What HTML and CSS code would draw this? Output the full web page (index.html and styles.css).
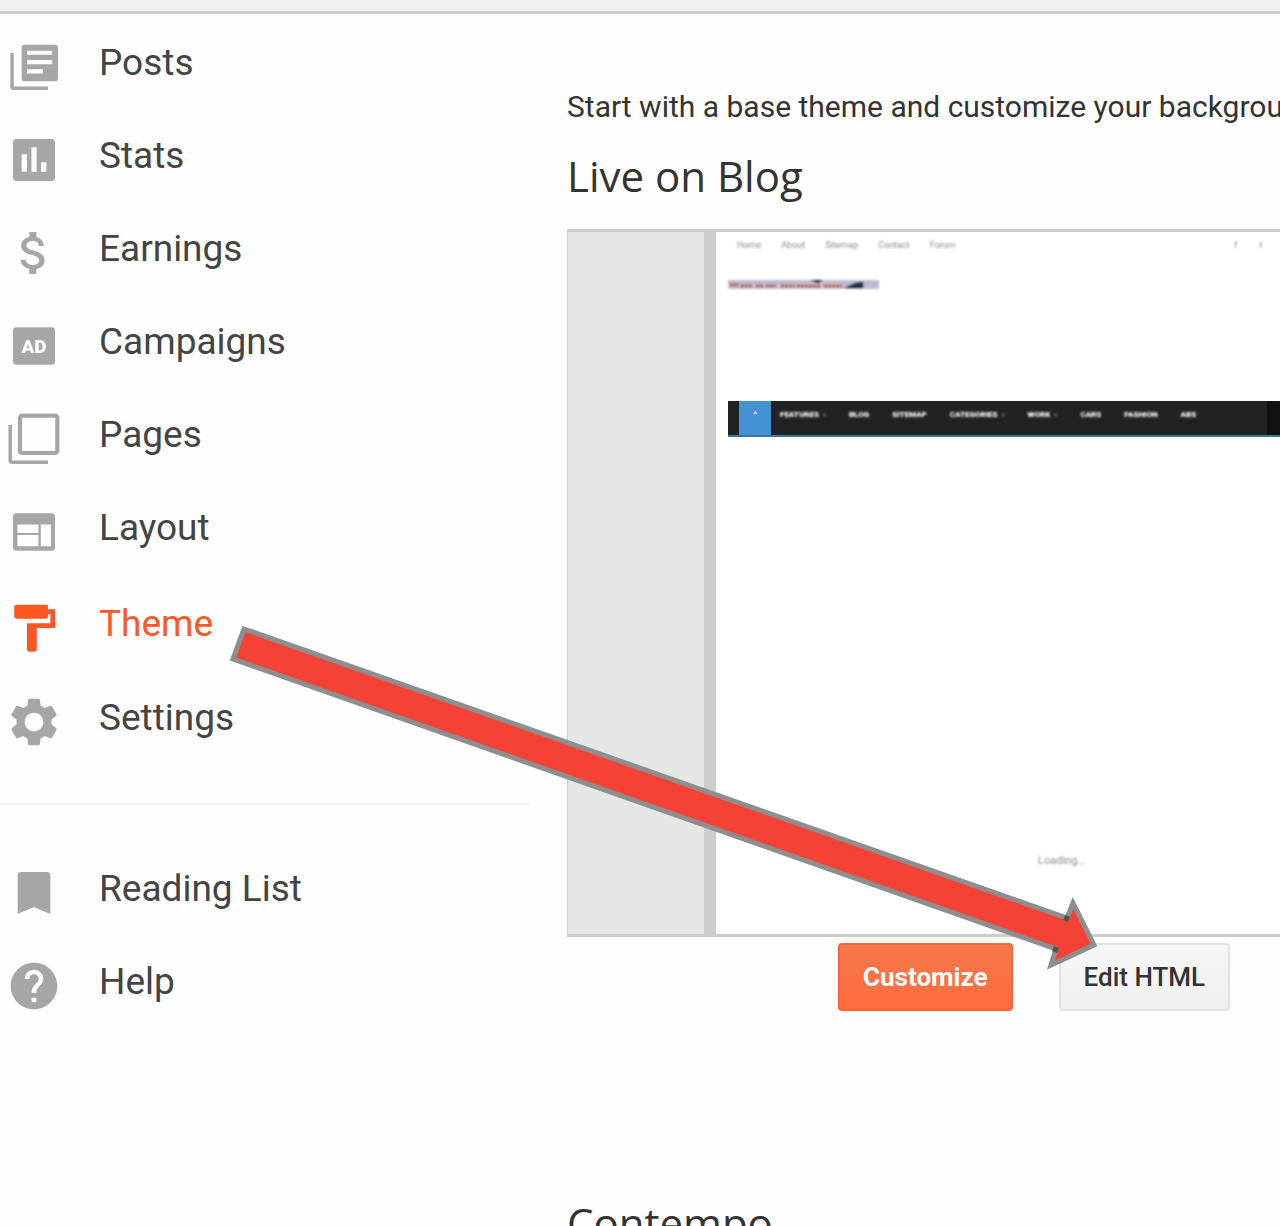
FILE: index.html
```html
<!DOCTYPE html>
<html lang="en">
<head>
<meta charset="UTF-8">
<meta name="viewport" content="width=device-width, initial-scale=1.0">
<title>Blogger - Theme</title>
<link rel="stylesheet" href="styles.css">
</head>
<body>

<div class="page">
    <header class="topbar"></header>

    <div class="columns">
        <nav class="sidebar">
            <a class="item" href="#posts">
                <svg class="icon" viewBox="0 0 24 24"><path d="M2.600 6v14.400c0 .4.3.7.7.7H18" fill="none" stroke="currentColor" stroke-width="1.500"/><path fill-rule="evenodd" d="M8 2.500h13a1.300 1.300 0 0 1 1.300 1.300v13a1.300 1.300 0 0 1-1.300 1.300H8a1.300 1.300 0 0 1-1.300-1.300v-13A1.300 1.300 0 0 1 8 2.500zM9 5v1.800h10.800V5zM9 9v1.800h10.800V9zM9 13v1.800h6.800V13z"/></svg>
                <span>Posts</span>
            </a>
            <a class="item" href="#stats">
                <svg class="icon" viewBox="0 0 24 24"><path fill-rule="evenodd" d="M4.500 3h15A1.500 1.500 0 0 1 21 4.500v15a1.500 1.500 0 0 1-1.500 1.500h-15A1.500 1.500 0 0 1 3 19.500v-15A1.500 1.500 0 0 1 4.500 3zM6.700 9.500V17H9V9.500zM10.900 6.500V17h2.200V6.500zM15 13v4h2.300v-4z"/></svg>
                <span>Stats</span>
            </a>
            <a class="item" href="#earnings">
                <svg class="icon" viewBox="0 0 24 24"><path d="M11.800 10.900c-2.270-.59-3-1.200-3-2.150 0-1.090 1.010-1.850 2.700-1.850 1.780 0 2.440.85 2.500 2.100h2.210c-.07-1.720-1.120-3.300-3.210-3.810V3h-3v2.160c-1.940.42-3.500 1.680-3.500 3.610 0 2.310 1.910 3.460 4.700 4.130 2.500.6 3 1.480 3 2.410 0 .69-.49 1.790-2.700 1.790-2.060 0-2.870-.92-2.980-2.100H6.320c.12 2.190 1.760 3.420 3.680 3.830V21h3v-2.150c1.950-.37 3.500-1.500 3.500-3.550 0-2.840-2.430-3.810-4.700-4.400z"/></svg>
                <span>Earnings</span>
            </a>
            <a class="item" href="#campaigns">
                <svg class="icon" viewBox="0 0 24 24"><rect x="3" y="4" width="18" height="16" rx="1.500"/><text class="ad" x="12" y="15" text-anchor="middle">AD</text></svg>
                <span>Campaigns</span>
            </a>
            <a class="item" href="#pages">
                <svg class="icon" viewBox="0 0 24 24"><g fill="none" stroke="currentColor"><path d="M1.800 6v15c0 .6.4 1 1 1H18" stroke-width="1.500"/><rect x="6" y="2" width="16" height="16" rx="1" stroke-width="1.800"/></g></svg>
                <span>Pages</span>
            </a>
            <a class="item" href="#layout">
                <svg class="icon" viewBox="0 0 24 24"><path fill-rule="evenodd" d="M4.500 4h15A1.500 1.500 0 0 1 21 5.500v13a1.500 1.500 0 0 1-1.500 1.500h-15A1.500 1.500 0 0 1 3 18.500v-13A1.500 1.500 0 0 1 4.500 4zM4.900 8.800v3.600h9V8.800zM4.900 13.300v4.800h9v-4.800zM14.900 8.800v9.300h4.400V8.800z"/></svg>
                <span>Layout</span>
            </a>
            <a class="item active" href="#theme">
                <svg class="icon" viewBox="0 0 24 24"><path d="M18 4V3a1 1 0 0 0-1-1H4.500a1 1 0 0 0-1 1v4a1 1 0 0 0 1 1H17a1 1 0 0 0 1-1V6h1v4H9v11.200a1 1 0 0 0 1 1h2.200a1 1 0 0 0 1-1V12H21V4z"/></svg>
                <span>Theme</span>
            </a>
            <a class="item" href="#settings">
                <svg class="icon" viewBox="0 0 24 24"><path d="M19.430 12.980c.04-.32.07-.64.07-.98s-.03-.66-.07-.98l2.110-1.650c.19-.15.24-.42.12-.64l-2-3.460c-.12-.22-.39-.3-.61-.22l-2.490 1c-.52-.4-1.080-.73-1.690-.98l-.38-2.650C14.460 2.180 14.250 2 14 2h-4c-.25 0-.46.18-.49.42l-.38 2.650c-.61.25-1.170.59-1.690.98l-2.490-1c-.23-.09-.49 0-.61.22l-2 3.460c-.13.22-.07.49.12.64l2.110 1.650c-.04.32-.07.65-.07.98s.03.66.07.98l-2.110 1.650c-.19.15-.24.42-.12.64l2 3.460c.12.22.39.3.61.22l2.490-1c.52.4 1.080.73 1.690.98l.38 2.650c.03.24.24.42.49.42h4c.25 0 .46-.18.49-.42l.38-2.650c.61-.25 1.170-.59 1.690-.98l2.490 1c.23.09.49 0 .61-.22l2-3.460c.12-.22.07-.49-.12-.64l-2.110-1.650zM12 16c-2.210 0-4-1.790-4-4s1.790-4 4-4 4 1.790 4 4-1.790 4-4 4z"/></svg>
                <span>Settings</span>
            </a>

            <hr class="divider">

            <a class="item" href="#reading-list">
                <svg class="icon" viewBox="0 0 24 24"><path d="M17.500 3h-11A1.500 1.500 0 0 0 5 4.500V21l7-3 7 3V4.500A1.500 1.500 0 0 0 17.500 3z"/></svg>
                <span>Reading List</span>
            </a>
            <a class="item" href="#help">
                <svg class="icon" viewBox="0 0 24 24"><path d="M12 2C6.480 2 2 6.480 2 12s4.480 10 10 10 10-4.480 10-10S17.520 2 12 2zm1 17h-2v-2h2v2zm2.070-7.750l-.9.920C13.450 12.900 13 13.500 13 15h-2v-.5c0-1.100.45-2.100 1.170-2.830l1.240-1.260c.37-.36.59-.86.59-1.410 0-1.100-.9-2-2-2s-2 .9-2 2H8c0-2.210 1.790-4 4-4s4 1.790 4 4c0 .88-.36 1.680-.93 2.250z"/></svg>
                <span>Help</span>
            </a>
        </nav>

        <main class="content">
            <p class="intro">Start with a base theme and customize your background</p>
            <h2 class="heading">Live on Blog</h2>

            <div class="preview">
                <div class="site">
                    <div class="site-top">
                        <span>Home</span>
                        <span>About</span>
                        <span>Sitemap</span>
                        <span>Contact</span>
                        <span>Forum</span>
                        <span class="social"><i>f</i><i>t</i></span>
                    </div>
                    <svg class="banner" viewBox="0 0 151 9">
                        <rect width="151" height="9" fill="#b9bcd2"/>
                        <path d="M0 4h60l10-2h45v7H0z" fill="#d3bec4"/>
                        <path d="M2 5h9m2 1h12m3 0h8m2 0h10m5 0h14m2 0h24m3 0h18" stroke="#9b6268" stroke-width="3" stroke-dasharray="3 1"/>
                        <path d="M82 0h13l-5 3zM116 8l12-5 7-1v6z" fill="#222b40"/>
                    </svg>
                    <div class="site-nav">
                        <span class="home">^</span>
                        <span class="more">FEATURES</span>
                        <span>BLOG</span>
                        <span>SITEMAP</span>
                        <span class="more">CATEGORIES</span>
                        <span class="more">WORK</span>
                        <span>CARS</span>
                        <span>FASHION</span>
                        <span>ABS</span>
                        <span class="random"></span>
                    </div>
                    <div class="loading">Loading...</div>
                </div>
            </div>

            <div class="actions">
                <button class="btn btn-primary" type="button">Customize</button>
                <button class="btn" type="button">Edit HTML</button>
            </div>

            <h2 class="heading">Contempo</h2>
        </main>
    </div>

    <svg class="arrow" viewBox="220 610 890 370">
        <path d="M244 629L1067 918L1073 903L1094 945L1051 965L1056 949L233 659Z" fill="#f44336" stroke="#8e8e8e" stroke-width="5"/>
        <path d="M1065 915l5 2-2 5-5-2zM1054 946l5 2-2 5-5-2z" fill="#555"/>
    </svg>
</div>

</body>
</html>
```
FILE: styles.css
```css
* {
    box-sizing: border-box;
}
body {
    margin: 0;
    font-family: Roboto, Arial, sans-serif;
    background-color: #fefefe;
    color: #333;
}
.page {
    position: relative;
    height: 100vh;
    overflow: hidden;
}
.topbar {
    height: 14px;
    background-color: #f1f1f1;
    border-bottom: 3px solid #ccc;
}
.columns {
    display: flex;
    gap: 37px;
}
.sidebar {
    flex: 0 0 530px;
    padding-top: 6px;
}
.item {
    display: flex;
    align-items: center;
    gap: 37px;
    height: 93px;
    padding-left: 6px;
    font-size: 37px;
    line-height: 44px;
    color: #444;
    text-decoration: none;
}
.item span {
    padding-bottom: 8px;
}
.icon {
    width: 56px;
    height: 56px;
    fill: currentColor;
    color: #a6a6a6;
}
.ad {
    font-size: 8px;
    font-weight: 900;
    fill: #fff;
}
.active {
    height: 97px;
    padding-top: 3px;
}
.active,
.active .icon {
    color: #ff5722;
}
.divider {
    height: 3px;
    margin: 34px 0 41px;
    border: none;
    background-color: #f2f2f2;
}
.content {
    flex: 1;
    min-width: 0;
    padding-top: 73px;
}
.intro {
    margin: 0;
    font-size: 30px;
    line-height: 40px;
    white-space: nowrap;
}
.heading {
    margin: 0;
    font-family: "Open Sans", sans-serif;
    font-size: 42px;
    font-weight: 400;
    line-height: 60px;
}
.intro + .heading {
    margin: 19px 0 23px;
}

/* blog thumbnail */
.preview {
    height: 708px;
    padding-left: 136px;
    border: 3px solid #ccc;
    border-left-width: 1px;
    border-right: none;
    background-color: #e4e7e6;
}
.site {
    height: 100%;
    padding-left: 12px;
    border-left: 12px solid #cccecd;
    background-color: #fff;
    font-size: 9px;
    line-height: 12px;
}
.site-top {
    display: flex;
    gap: 20px;
    padding: 7px 18px 0 9px;
    color: #888;
    filter: blur(1px);
}
.social {
    display: flex;
    gap: 22px;
    margin-left: auto;
}
.banner {
    display: block;
    width: 151px;
    height: 9px;
    margin: 29px 0 112px;
    filter: blur(1px);
}
.site-nav {
    display: flex;
    gap: 23px;
    height: 36px;
    padding-left: 11px;
    border-bottom: 2px solid #3f73a3;
    background-color: #222;
    color: #fff;
    font-size: 8px;
    font-weight: 900;
    line-height: 28px;
}
.site-nav span {
    filter: blur(1px);
}
.site-nav .home {
    width: 32px;
    margin-right: -14px;
    background-color: #4492d4;
    text-align: center;
    filter: none;
}
.more::after {
    content: "▾";
    margin-left: 4px;
    color: #777;
    font-size: 6px;
}
.site-nav .random {
    width: 13px;
    margin-left: auto;
    background-color: #111;
    filter: none;
}
.loading {
    padding: 418px 0 0 310px;
    color: #888;
    font-size: 11px;
    filter: blur(1px);
}

.actions {
    display: flex;
    gap: 46px;
    padding: 6px 0 0 271px;
    margin-bottom: 182px;
}
.btn {
    height: 68px;
    padding: 0 23px;
    border: 2px solid #e2e2e2;
    border-radius: 4px;
    background: linear-gradient(#f6f6f6, #f0f0f0);
    color: #333;
    font-family: inherit;
    font-size: 26px;
    font-weight: 500;
    white-space: nowrap;
}
.btn-primary {
    border-color: #fa6638;
    background: linear-gradient(#f4774c, #ff6d3d);
    color: #fff;
    font-weight: 700;
}

/* pointer from the menu to the edit button */
.arrow {
    position: absolute;
    top: 610px;
    left: 220px;
    width: 890px;
    height: 370px;
    pointer-events: none;
}
```
